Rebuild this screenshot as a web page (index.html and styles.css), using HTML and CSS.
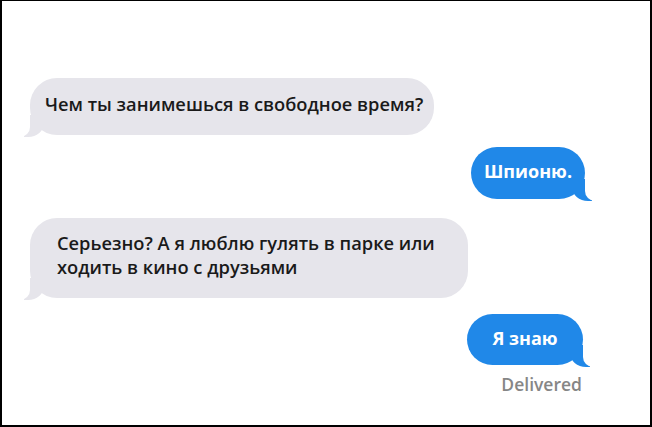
FILE: index.html
```html
<!DOCTYPE html>
<html lang="ru">
  <head>
    <meta charset="UTF-8" />
    <meta name="viewport" content="width=device-width, initial-scale=1.0" />
    <title>Сообщения</title>
    <link rel="stylesheet" href="styles.css">
  </head>
  <body>
    <div class="screen">
      <div class="thread">
        <div class="msg msg-in msg-first">Чем ты занимешься в свободное время?</div>
        <div class="msg msg-out msg-spy">Шпионю.</div>
        <div class="msg msg-in msg-long">Серьезно? А я люблю гулять в парке или ходить в кино с друзьями</div>
        <div class="msg msg-out msg-know">Я знаю</div>
        <div class="status">Delivered</div>
      </div>
    </div>
  </body>
</html>
```

FILE: styles.css
```css
* {
  box-sizing: border-box;
}
body {
  margin: 0;
  background: #fff;
}
.screen {
  width: 652px;
  height: 427px;
  border: 2px solid #000;
  border-top-width: 1px;
  background: #fff;
  overflow: hidden;
}
.thread {
  display: flex;
  flex-direction: column;
  padding: 77px 65px 0 28px;
}
.msg {
  position: relative;
  font-family: "Open Sans", "Liberation Sans", sans-serif;
  font-weight: 600;
  font-size: 18px;
  border-radius: 27px;
  white-space: nowrap;
}
.msg-in {
  align-self: flex-start;
  background: #e6e5eb;
  color: #1a1a1a;
  font-size: 18.3px;
}
.msg-out {
  align-self: flex-end;
  background: #2088e8;
  color: #fff;
  font-weight: 700;
}
.msg::before,
.msg::after {
  content: "";
  position: absolute;
  bottom: -2px;
  height: 22px;
}
.msg-in::before {
  left: -6px;
  width: 20px;
  background: #e6e5eb;
  border-bottom-right-radius: 16px 14px;
}
.msg-in::after {
  left: -10px;
  width: 10px;
  background: #fff;
  border-bottom-right-radius: 10px;
}
.msg-out::before {
  right: -7px;
  width: 20px;
  background: #2088e8;
  border-bottom-left-radius: 16px 14px;
}
.msg-out::after {
  right: -10px;
  width: 10px;
  background: #fff;
  border-bottom-left-radius: 10px;
}
.msg-first {
  width: 404px;
  line-height: 23px;
  padding: 14px 0 20px 15px;
}
.msg-spy {
  margin-top: 12px;
  width: 114px;
  line-height: 22px;
  padding: 13px 0 17px;
  text-align: center;
}
.msg-long {
  margin-top: 19px;
  width: 438px;
  line-height: 24px;
  padding: 13px 14px 19px 27px;
  white-space: normal;
}
.msg-know {
  margin-top: 16px;
  margin-right: 2px;
  width: 116px;
  line-height: 22px;
  padding: 13px 0 16px;
  text-align: center;
  border-radius: 26px;
}
.status {
  align-self: flex-end;
  margin-top: 8px;
  margin-right: 3px;
  font-family: "Open Sans", "Liberation Sans", sans-serif;
  font-weight: 600;
  font-size: 17.5px;
  line-height: 22px;
  color: #868686;
}
```
